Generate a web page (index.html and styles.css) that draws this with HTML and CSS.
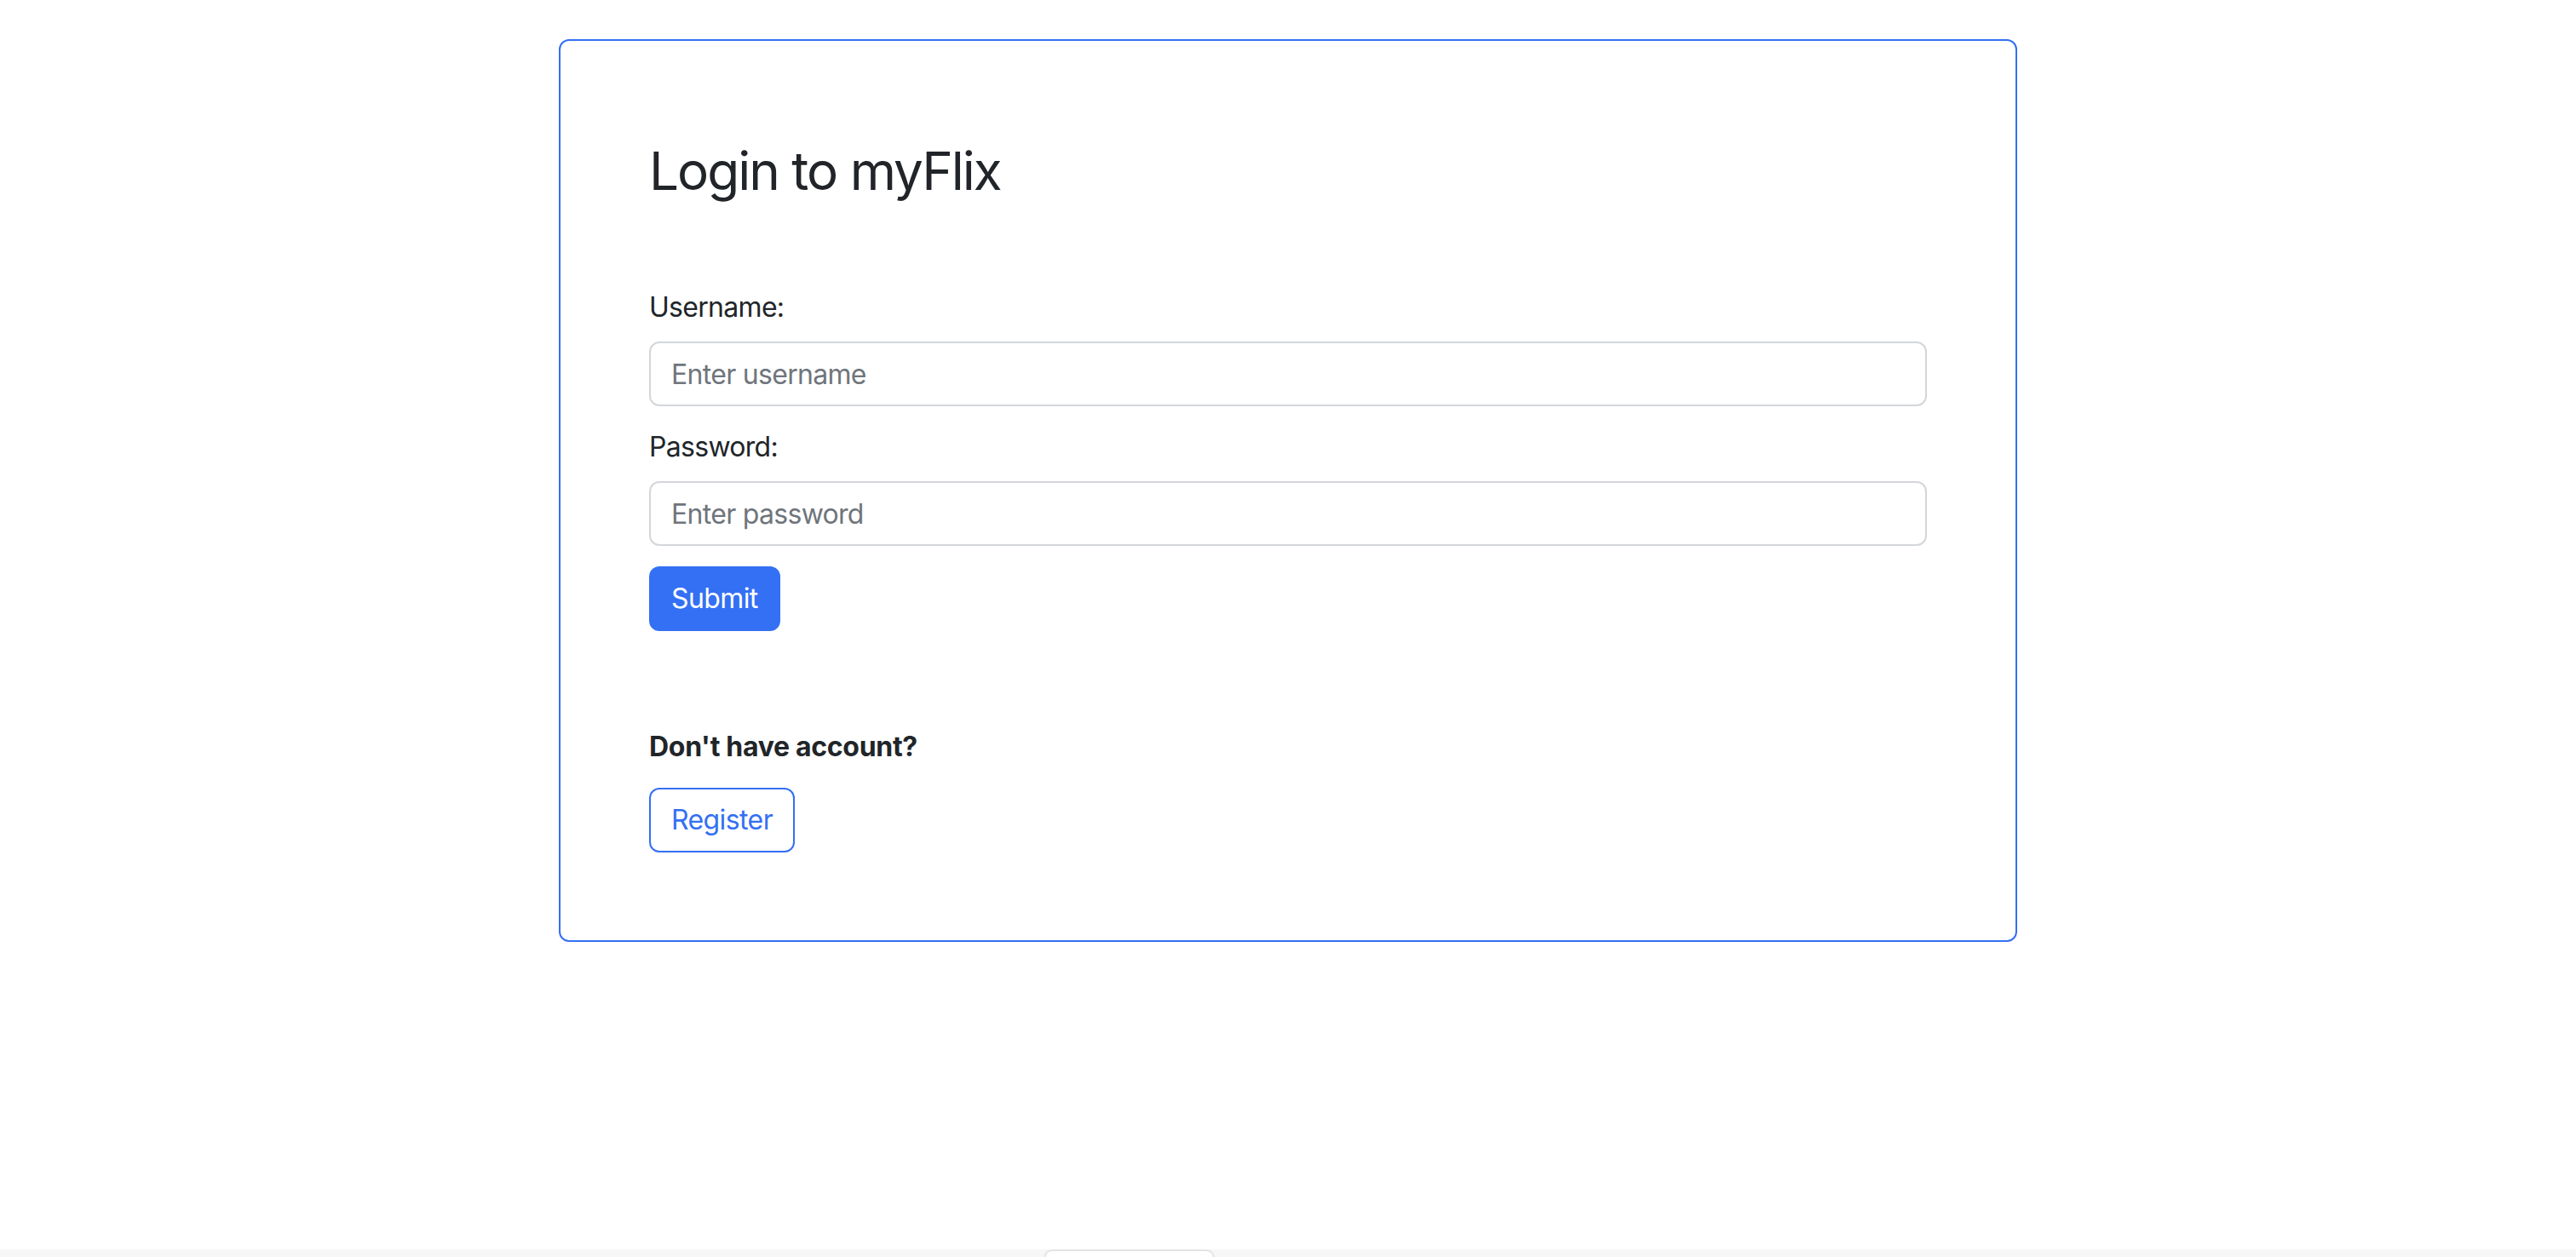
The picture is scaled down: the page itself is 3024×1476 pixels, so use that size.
FILE: index.html
```html
<!DOCTYPE html>
<html lang="en">
<head>
<meta charset="utf-8">
<title>Login to myFlix</title>
<link rel="stylesheet" href="styles.css">
</head>
<body>
<main class="page">
  <section class="card">
    <h2 class="title">Login to myFlix</h2>
    <form class="login-form">
      <div class="field">
        <label class="field-label" for="username">Username:</label>
        <input class="field-input" id="username" type="text" placeholder="Enter username">
      </div>
      <div class="field">
        <label class="field-label" for="password">Password:</label>
        <input class="field-input" id="password" type="password" placeholder="Enter password">
      </div>
      <button type="button" class="btn btn-primary">Submit</button>
    </form>
    <div class="register">
      <p class="register-text">Don't have account?</p>
      <button type="button" class="btn btn-outline">Register</button>
    </div>
  </section>
</main>
<div class="bottom-strip"><div class="bottom-tab"></div></div>
</body>
</html>
```
FILE: styles.css
```css
* { box-sizing: border-box; }
html, body { margin: 0; padding: 0; background: #ffffff; }
body {
  font-family: Inter, "Noto Sans", sans-serif;
  color: #212529;
  font-size: 32px;
  line-height: 1.5;
  letter-spacing: -0.7px;
  overflow: hidden;
  height: 1476px;
}
.page {
  padding-top: 46px;
  display: flex;
  justify-content: center;
}
.card {
  width: 1712px;
  border: 2px solid #3470f4;
  border-radius: 12px;
  padding: 104px 104px 103px;
}
.title {
  font-family: Inter, "Liberation Sans", sans-serif;
  font-weight: 400;
  font-size: 62px;
  line-height: 76px;
  margin: 11px 0 98px;
  letter-spacing: -2px;
}
.login-form { margin: 0; }
.field { margin-bottom: 24px; }
.field-label {
  display: block;
  margin-bottom: 16px;
  line-height: 48px;
}
.field-input {
  display: block;
  width: 100%;
  height: 76px;
  padding: 12px 24px;
  font-family: inherit;
  font-size: 32px;
  line-height: 48px;
  letter-spacing: -0.7px;
  color: #212529;
  border: 2px solid #d3d6da;
  border-radius: 12px;
  background: #fff;
  outline: none;
}
.field-input::placeholder { color: #6f757c; }
.btn {
  display: inline-block;
  font-family: inherit;
  font-size: 32px;
  line-height: 48px;
  letter-spacing: -0.6px;
  padding: 12px 24px;
  border-radius: 12px;
  border: 2px solid #3470f4;
  cursor: pointer;
}
.btn-primary { background: #3470f4; color: #fff; }
.btn-outline { background: #fff; color: #3470f4; }
.register { margin-top: 112px; }
.register-text {
  margin: 0 0 24px;
  font-weight: 700;
  line-height: 48px;
  letter-spacing: -0.3px;
}
.bottom-strip {
  position: fixed;
  left: 0;
  right: 0;
  bottom: 0;
  height: 9px;
  background: #f7f7f7;
}
.bottom-tab {
  position: absolute;
  left: 1227px;
  top: 2px;
  width: 197px;
  height: 20px;
  background: #fff;
  border-radius: 8px;
  box-shadow: 0 0 3px rgba(0,0,0,0.3);
}
```
